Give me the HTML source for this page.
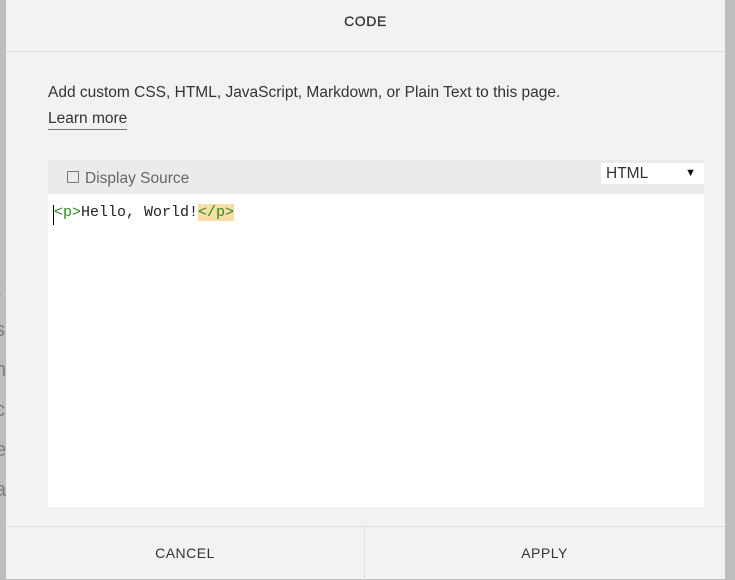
<!DOCTYPE html>
<html><head><meta charset="utf-8"><style>
*{margin:0;padding:0;box-sizing:border-box}
body{width:735px;height:579px;overflow:hidden;background:#bdbdbd;font-family:"Liberation Sans",sans-serif;position:relative}
.bgtxt{position:absolute;left:-5px;color:#7e7e7e;font-size:20px;line-height:24px}
.modal{position:absolute;left:6px;top:0;width:719px;height:579px;background:#f2f2f2}
.hdr{position:absolute;left:0;top:0;width:719px;height:52px;border-bottom:1px solid #e0e0e0;text-align:center;line-height:42px;font-size:14px;letter-spacing:.6px;color:#333;font-weight:500;-webkit-text-stroke:0.3px #333}
.desc{position:absolute;left:42px;top:84px;font-size:15.5px;color:#333}
.learn{position:absolute;left:42px;top:110px;font-size:15.5px;color:#333;border-bottom:1px solid #777;line-height:17px;padding-bottom:2px}
.tb{position:absolute;left:42px;top:160px;width:656px;height:34px;background:#ebebeb}
.cb{position:absolute;left:19px;top:11px;width:12px;height:12px;border:1.5px solid #777;border-radius:1px}
.ds{position:absolute;left:37px;top:10px;font-size:15.5px;color:#666}
.sel{position:absolute;left:553px;top:3px;width:103px;height:21px;background:#fff;font-size:15.5px;color:#333;padding-left:5px;line-height:21px}
.sel span{position:absolute;right:8px;top:0;font-size:11px;color:#111}
.ed{position:absolute;left:42px;top:194px;width:656px;height:313px;background:#fff}
.code{position:absolute;left:5px;top:11px;font-family:"Liberation Mono","Courier New",monospace;font-size:15px;color:#222;border-left:1px solid #000;height:20px;line-height:16px}
.g{color:#2c8a1a}.hl{background:#f9dea8}
.ft{position:absolute;left:0;top:526px;width:719px;height:53px;border-top:1px solid #e0e0e0}
.btn{position:absolute;top:0;width:359px;height:53px;text-align:center;line-height:53px;font-size:14px;letter-spacing:.5px;color:#333}
</style></head><body>
<div class="bgtxt" style="top:278px">t</div>
<div class="bgtxt" style="top:318px">s</div>
<div class="bgtxt" style="top:358px">n</div>
<div class="bgtxt" style="top:398px">c</div>
<div class="bgtxt" style="top:438px">e</div>
<div class="bgtxt" style="top:478px">a</div>
<div class="modal">
<div class="hdr">CODE</div>
<div class="desc">Add custom CSS, HTML, JavaScript, Markdown, or Plain Text to this page.</div>
<div class="learn">Learn more</div>
<div class="tb"><div class="cb"></div><div class="ds">Display Source</div><div class="sel">HTML<span>▼</span></div></div>
<div class="ed"><div class="code"><span class="g">&lt;p&gt;</span>Hello, World!<span class="g hl">&lt;/p&gt;</span></div></div>
<div class="ft"><div class="btn" style="left:0;border-right:1px solid #e0e0e0">CANCEL</div><div class="btn" style="left:359px">APPLY</div></div>
</div>
</body></html>
